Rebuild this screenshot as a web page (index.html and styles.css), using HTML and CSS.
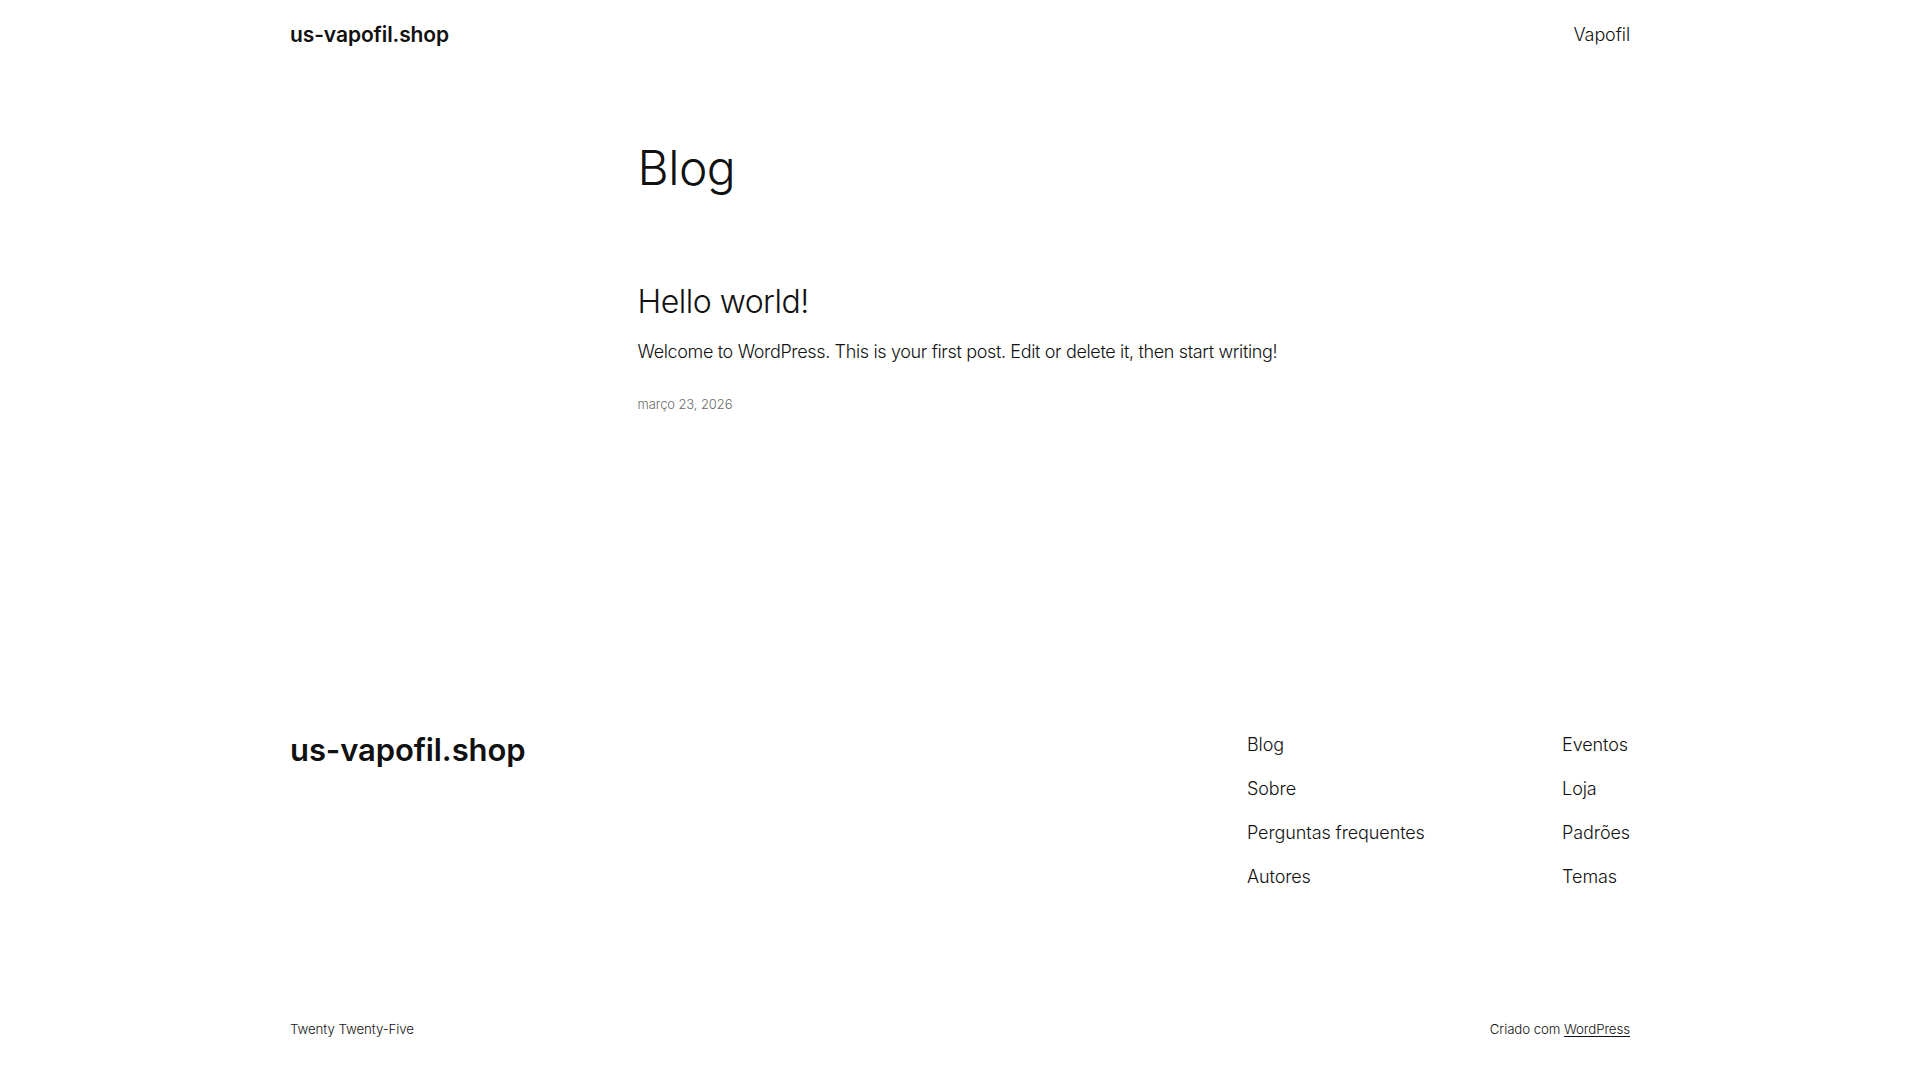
FILE: index.html
```html
<!DOCTYPE html>
<html lang="pt-BR">
<head>
<meta charset="utf-8">
<title>Blog – us-vapofil.shop</title>
<link rel="stylesheet" href="styles.css">
</head>
<body>
<header class="site-header">
  <div class="wide header-row">
    <a class="site-title" href="#">us-vapofil.shop</a>
    <nav class="header-nav"><a href="#">Vapofil</a></nav>
  </div>
</header>

<main class="site-main">
  <div class="content">
    <h1 class="page-title">Blog</h1>
    <article class="post">
      <h2 class="post-title"><a href="#">Hello world!</a></h2>
      <p class="post-excerpt">Welcome to WordPress. This is your first post. Edit or delete it, then start writing!</p>
      <div class="post-date">março 23, 2026</div>
    </article>
  </div>
</main>

<footer class="site-footer">
  <div class="wide footer-top">
    <a class="footer-title" href="#">us-vapofil.shop</a>
    <div class="footer-navs">
      <ul class="footer-menu">
        <li><a href="#">Blog</a></li>
        <li><a href="#">Sobre</a></li>
        <li><a href="#">Perguntas frequentes</a></li>
        <li><a href="#">Autores</a></li>
      </ul>
      <ul class="footer-menu">
        <li><a href="#">Eventos</a></li>
        <li><a href="#">Loja</a></li>
        <li><a href="#">Padrões</a></li>
        <li><a href="#">Temas</a></li>
      </ul>
    </div>
  </div>
  <div class="wide footer-bottom">
    <span class="theme-name">Twenty Twenty-Five</span>
    <span class="credit">Criado com <a href="#">WordPress</a></span>
  </div>
</footer>
</body>
</html>
```

FILE: styles.css
```css
* { box-sizing: border-box; }

html, body {
  margin: 0;
  padding: 0;
  background: #ffffff;
}

body {
  font-family: Inter, "Noto Sans", "Liberation Sans", sans-serif;
  color: #111111;
  font-weight: 300;
  letter-spacing: -0.1px;
}

a { color: inherit; text-decoration: none; }

.wide {
  width: 1340px;
  margin: 0 auto;
}

/* Header */
.site-header {
  padding: 21px 0 20px;
}
.header-row {
  display: flex;
  justify-content: space-between;
  align-items: center;
}
.site-title {
  font-size: 21px;
  line-height: 28px;
  font-weight: 600;
  letter-spacing: -0.1px;
}
.header-nav {
  font-size: 18px;
  line-height: 28px;
  font-weight: 300;
}

/* Main */
.site-main {
  padding-top: 70px;
  min-height: 662px;
}
.content {
  width: 645px;
  margin: 0 auto;
}
.page-title {
  margin: 0;
  font-size: 48px;
  line-height: 1.2;
  font-weight: 300;
  letter-spacing: -0.5px;
}
.post {
  margin-top: 86px;
}
.post-title {
  margin: 0;
  font-size: 32px;
  line-height: 1.2;
  font-weight: 300;
  letter-spacing: -0.5px;
}
.post-excerpt {
  margin: 17px 0 0;
  font-size: 18px;
  line-height: 28px;
  font-weight: 300;
  letter-spacing: -0.35px;
  white-space: nowrap;
}
.post-date {
  margin-top: 28px;
  font-size: 13px;
  line-height: 20px;
  color: #6a6a6a;
  font-weight: 300;
}

/* Footer */
.site-footer {
  padding-bottom: 27px;
}
.footer-top {
  display: flex;
  justify-content: space-between;
  align-items: flex-start;
}
.footer-title {
  margin-top: 1px;
  font-size: 31px;
  line-height: 36px;
  font-weight: 600;
  letter-spacing: -0.1px;
}
.footer-navs {
  width: 383px;
  display: flex;
  justify-content: space-between;
}
.footer-menu {
  list-style: none;
  margin: 0;
  padding: 0;
  display: flex;
  flex-direction: column;
  gap: 16px;
  font-size: 18px;
  line-height: 28px;
  font-weight: 300;
}
.footer-bottom {
  margin-top: 128px;
  display: flex;
  justify-content: space-between;
  align-items: center;
  font-size: 13.3px;
  line-height: 20px;
  font-weight: 300;
  letter-spacing: -0.1px;
}
.credit a {
  text-decoration: underline;
  text-underline-offset: 2px;
}
```
